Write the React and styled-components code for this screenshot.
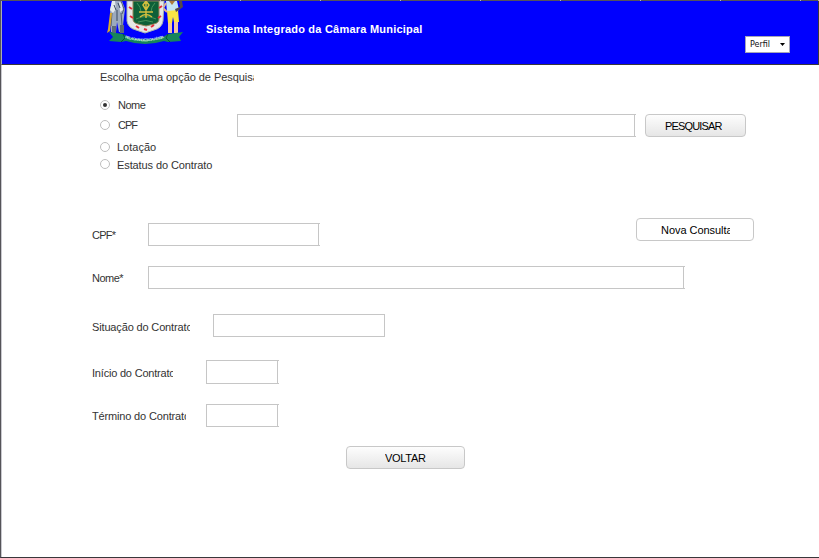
import React from 'react';
import styled, { createGlobalStyle } from 'styled-components';

const Global = createGlobalStyle`
  * { box-sizing: border-box; }
  body { margin: 0; background: #fff; }
`;

const Page = styled.div`
  width: 819px;
  height: 558px;
  display: flex;
  flex-direction: column;
  overflow: hidden;
  border-left: 1px solid #555459;
  border-bottom: 1px solid #39373b;
  background: #fff;
  color: #333;
  font: 11px/14px 'Liberation Sans', Arial, sans-serif;
`;

const Ruler = styled.div`
  height: 1px;
  flex: none;
  background: repeating-linear-gradient(to right, #b5b5b5 0 1px, #55545a 1px 80px) -1px 0;
`;

const Header = styled.header`
  height: 64px;
  flex: none;
  display: flex;
  align-items: flex-start;
  padding-left: 105px;
  border-left: 1px solid #aaaab4;
  border-right: 1px solid #39373b;
  border-bottom: 1px solid #39373b;
  background: #0000fe;
`;

const Crest = styled.svg`
  width: 78px;
  height: 44px;
  flex: none;
`;

const SystemName = styled.h1`
  width: 217px;
  margin: 21px 322px 0 21px;
  white-space: nowrap;
  color: #fff;
  font-size: 11px;
  line-height: 14px;
  letter-spacing: ${(p) => p.$spacing}px;
`;

const Profile = styled.button`
  width: 45px;
  height: 17px;
  margin: 35px 0 0;
  padding: 0 4px;
  display: flex;
  align-items: center;
  justify-content: space-between;
  border: 1px solid #a5a5b8;
  border-radius: 0;
  background: #fff;
  color: #111;
  font: 8px/14px 'DejaVu Sans', sans-serif;
  letter-spacing: ${(p) => p.$spacing}px;
`;

const Arrow = styled.svg`
  width: 5px;
  height: 3px;
`;

const Body = styled.main`
  flex: 1;
  display: flex;
  flex-direction: column;
  border-left: 1px solid #c9c9cf;
`;

const Caption = styled.div`
  width: ${(p) => p.$width}px;
  flex: none;
  overflow: hidden;
  white-space: nowrap;
  letter-spacing: ${(p) => p.$spacing || 0}px;
`;

const Search = styled.section`
  height: 148px;
  padding: 5px 0 0 98px;
`;

const SearchRow = styled.div`
  display: flex;
  align-items: flex-start;
  margin-top: 14px;
`;

const Options = styled.div`
  width: 137px;
  flex: none;
  display: flex;
  flex-direction: column;
`;

const Option = styled.label`
  height: 14px;
  margin-top: ${(p) => p.$gap}px;
  display: flex;
  align-items: center;
  gap: ${(p) => p.$indent}px;
`;

const Radio = styled.svg`
  width: 10px;
  height: 10px;
  flex: none;
  margin-top: ${(p) => p.$shift || 0}px;
`;

const Field = styled.input`
  width: ${(p) => p.$width}px;
  height: ${(p) => p.$height || 23}px;
  flex: none;
  margin: ${(p) => p.$top || 0}px 0 0;
  padding: 0 4px;
  border: solid #c6c6c6;
  border-width: 1px 0 1px 1px;
  border-radius: 0;
  background: linear-gradient(#c6c6c6, #c6c6c6) right ${(p) => (p.$flush ? 0 : 1)}px top / 1px 100% no-repeat #fff;
  font: inherit;
  outline: none;
`;

const Button = styled.button`
  width: ${(p) => p.$width}px;
  height: 23px;
  flex: none;
  margin: ${(p) => p.$margin || 0};
  padding: 0;
  display: flex;
  align-items: center;
  padding-left: ${(p) => p.$inset}px;
  border: 1px solid #c8c8c8;
  border-radius: 4px;
  background: ${(p) => (p.$plain ? '#fff' : 'linear-gradient(#fdfdfd, #e6e6e6)')};
  color: #000;
  font: inherit;
  text-align: left;
`;

const Form = styled.section`
  display: flex;
  flex-direction: column;
  align-items: flex-start;
  padding-left: 90px;
`;

const FormRow = styled.div`
  height: 24px;
  margin-top: ${(p) => p.$gap}px;
  display: flex;
  align-items: flex-start;
`;

const RowLabel = styled.label`
  width: ${(p) => p.$column}px;
  flex: none;
  padding-top: ${(p) => p.$top || 5}px;
`;

const options = [
  { text: 'Nome', gap: 0, indent: 8, width: 40, spacing: -0.5, checked: true },
  { text: 'CPF', gap: 6, indent: 8, width: 40, spacing: -1 },
  { text: 'Lotação', gap: 8, indent: 7, width: 60, spacing: 0 },
  { text: 'Estatus do Contrato', gap: 4, indent: 7, width: 110, spacing: -0.1, shift: -2 },
];

const rows = [
  { text: 'CPF*', gap: 10, column: 56, clip: 50, width: 172, spacing: -0.75 },
  { text: 'Nome*', gap: 19, column: 56, clip: 50, width: 537, spacing: -0.5 },
  { text: 'Situação do Contrato', gap: 24, column: 121, clip: 98, width: 172, spacing: -0.15, flush: true, labelTop: 6 },
  { text: 'Início do Contrato', gap: 22, column: 114, clip: 81, width: 73, spacing: -0.2, height: 24, labelTop: 6 },
  { text: 'Término do Contrato', gap: 20, column: 114, clip: 94, width: 73, spacing: -0.16 },
];

function Arms() {
  return (
    <Crest viewBox="0 0 78 44">
      <g>
        <path d="M5 0h10l3 8-2 16v7h-4l-2-10-1 10H4L3 9z" fill="#9caabd" />
        <path d="M5 0h3l1 8-3 4-3-3zM12 1l3 1 1 7-3 2z" fill="#e4eaec" />
        <path d="M14 0l3 8-2 5M5 12l-1 13m10-13 1 12" fill="none" stroke="#536174" />
        <path d="M10 9v11m1-18 2 5M7 4l2 5" stroke="#384860" fill="none" />
        <path d="M3 12l2 0-2 18-3 2 1-4z" fill="#d9a92d" />
        <path d="M5 25h4v7H5zm8-1h4v8h-4z" fill="#5e6a78" />
      </g>
      <g>
        <path d="M59 0h11l2 9-6 3-6-1z" fill="#c5e4f3" />
        <path d="M62 0h6l-3 4z" fill="#ae793b" />
        <path d="M60 10l11-1 1 12h-5l-1-5-1 6h-4z" fill="#fae445" />
        <path d="M61 22h4v10h-4zm6-1h4v11h-4z" fill="#f0c4a0" />
        <path d="M68 8l5-2-1-6h3l1 6-7 5z" fill="#55494a" />
        <path d="M59 2l-3 5 4 4" fill="none" stroke="#e6b28f" strokeWidth="2" />
      </g>
      <path d="M20 0h37l-1 20q-1 7-9 9l-9 3-9-3q-8-2-9-9z" fill="#e5e8e6" stroke="#a9b4b1" />
      <path d="M26 0h26v18q0 4-5 5l-8 2-8-2q-5-1-5-5z" fill="#0e6038" stroke="#948659" />
      <path d="M30 2q4 4 4 9m14-9q-4 4-4 9M29 18q10-5 20 0M31 21q8-3 15 0" fill="none" stroke="#44935b" />
      <path d="M39 0v17m-7-6h14m-10-7 3-4 3 4-3 5zM33 16q6-5 12 0" fill="none" stroke="#d3bf3e" strokeWidth="1.5" />
      <path d="M22 6l3 2m-2 7 3 2m3 8 3 2m5 1 3 1m4-3 3-2m4-7 3-2m-2-8 3-2" stroke="#e52f3b" strokeWidth="2" />
      <path d="M2 31l14 2 5 3q17 5 35 0l5-3 15-2-4 5 2 4-13 1-4-1q-19 6-38 0l-5 1-12-1 4-4z" fill="#16855a" />
      <path d="M16 33l2 4-4 4m47-8-2 4 4 4" fill="none" stroke="#075138" />
      <path id="motto" d="M18 37q20 7 42-1" fill="none" />
      <text fill="#d4f2dd" fontFamily="Liberation Sans" fontSize="3.8" fontWeight="700">
        <textPath href="#motto" textLength="40">PELA GRANDEZA DA PÁTRIA</textPath>
      </text>
    </Crest>
  );
}

export default function App() {
  return (
    <>
      <Global />
      <Page>
        <Ruler />
        <Header>
          <Arms />
          <SystemName $spacing={0.22}>Sistema Integrado da Câmara Municipal</SystemName>
          <Profile $spacing={0}>
            Perfil
            <Arrow viewBox="0 0 5 3"><path d="M0 0h5L2.5 3z" fill="#000" /></Arrow>
          </Profile>
        </Header>
        <Body>
          <Search>
            <Caption $width={154} $spacing={-0.05}>Escolha uma opção de Pesquisa</Caption>
            <SearchRow>
              <Options>
                {options.map((o) => (
                  <Option key={o.text} $gap={o.gap} $indent={o.indent}>
                    <Radio viewBox="0 0 10 10" $shift={o.shift}>
                      <circle cx="5" cy="5" r="4.5" fill="#fff" stroke="#bdbdbd" />
                      {o.checked && <circle cx="5" cy="5" r="2" fill="#333" />}
                    </Radio>
                    <Caption $width={o.width} $spacing={o.spacing}>{o.text}</Caption>
                  </Option>
                ))}
              </Options>
              <Field $width={399} $top={16} aria-label="Pesquisa" />
              <Button $width={101} $inset={19} $margin="16px 0 0 9px">
                <Caption $width={62} $spacing={-0.85}>PESQUISAR</Caption>
              </Button>
            </SearchRow>
          </Search>
          <Form>
            {rows.map((r, i) => (
              <FormRow key={r.text} $gap={r.gap}>
                <RowLabel $column={r.column} $top={r.labelTop}>
                  <Caption $width={r.clip} $spacing={r.spacing}>{r.text}</Caption>
                </RowLabel>
                <Field $width={r.width} $height={r.height} $flush={r.flush} aria-label={r.text} />
                {i === 0 && (
                  <Button $plain $width={118} $inset={24} $margin="-5px 0 0 316px">
                    <Caption $width={69} $spacing={-0.05}>Nova Consulta</Caption>
                  </Button>
                )}
              </FormRow>
            ))}
            <Button $width={119} $inset={38} $margin="18px 0 0 254px">
              <Caption $width={42} $spacing={-0.3}>VOLTAR</Caption>
            </Button>
          </Form>
        </Body>
      </Page>
    </>
  );
}
